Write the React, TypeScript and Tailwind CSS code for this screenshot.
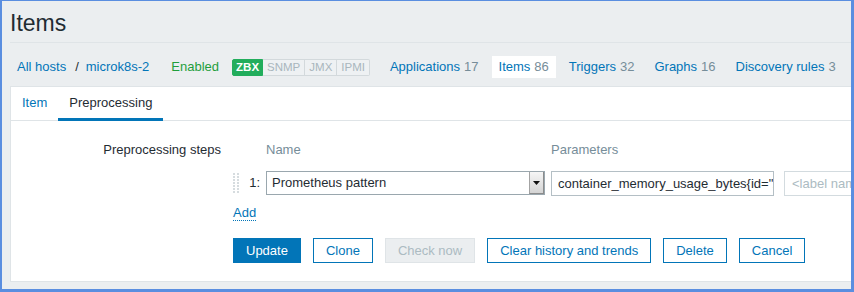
import React from "react";

function DragHandle() {
  const dots = [];
  for (let r = 0; r < 7; r++) {
    for (let c = 0; c < 2; c++) {
      dots.push(<rect key={`${r}-${c}`} x={c * 4} y={r * 3} width="2" height="2" fill="#d6dcdf" />);
    }
  }
  return (
    <svg width="6" height="20" viewBox="0 0 6 20" className="shrink-0">
      {dots}
    </svg>
  );
}

function NavItem({ label, count, active }: { label: string; count: string; active?: boolean }) {
  return (
    <div className={`flex h-[22px] items-center px-[7px] whitespace-nowrap ${active ? "bg-white" : ""}`}>
      <span className="text-[#0275b8]">{label}</span>
      <span className="ml-[4px] text-[#768d99]">{count}</span>
    </div>
  );
}

export default function App() {
  return (
    <div className="w-[854px] h-[292px] overflow-hidden border-l-2 border-t border-r-[3px] border-b-[3px] border-[#5a8ee0] bg-[#ebeef0] font-['Liberation_Sans',Arial,sans-serif] text-[13px] text-[#1f2c33]">
      <div className="pl-[8px]">
        <div className="pt-[9px] pb-[6px] border-b border-[#dfe4e7]">
          <h1 className="text-[23px] leading-[26px] font-normal">Items</h1>
        </div>

        <div className="flex items-center pt-[13px] pb-[8px] h-[43px] whitespace-nowrap">
          <span className="ml-[7px] text-[#0275b8]">All hosts</span>
          <span className="ml-[9px] text-[#1f2c33]">/</span>
          <span className="ml-[7px] text-[#0275b8]">microk8s-2</span>
          <span className="ml-[22px] text-[#1f9e3c]">Enabled</span>
          <div className="ml-[13px] flex h-[17px] text-[11.5px] leading-[15px]">
            <span className="px-[3px] border border-[#22ad5c] bg-[#22ad5c] text-white font-bold rounded-l-[2px]">ZBX</span>
            <span className="px-[4px] border-y border-r border-[#d3d9dc] bg-[#eef1f3] text-[#a9b6bd]">SNMP</span>
            <span className="px-[4px] border-y border-r border-[#d3d9dc] bg-[#eef1f3] text-[#a9b6bd]">JMX</span>
            <span className="px-[4px] border-y border-r border-[#d3d9dc] bg-[#eef1f3] text-[#a9b6bd] rounded-r-[2px]">IPMI</span>
          </div>
          <div className="ml-[13px] flex gap-[6px]">
            <NavItem label="Applications" count="17" />
            <NavItem label="Items" count="86" active />
            <NavItem label="Triggers" count="32" />
            <NavItem label="Graphs" count="16" />
            <NavItem label="Discovery rules" count="3" />
          </div>
        </div>

        <div className="bg-white border-t border-l border-b border-[#dfe4e7]">
          <div className="flex h-[34px] border-b border-[#dfe4e7]">
            <div className="flex h-[34px] items-center px-[11px] pt-px border-b-[3px] border-transparent text-[#0275b8]">Item</div>
            <div className="flex h-[34px] items-center px-[11px] pt-px border-b-[3px] border-[#0275b8] text-[#1f2c33]">Preprocessing</div>
          </div>

          <div className="flex pt-[19px] pb-[18px]">
            <div className="w-[210px] shrink-0 text-right leading-[20px]">Preprocessing steps</div>
            <div className="ml-[12px] flex flex-col">
              <div className="flex h-[20px] items-center text-[#768d99]">
                <div className="w-[33px] shrink-0" />
                <div className="w-[285px] shrink-0">Name</div>
                <div>Parameters</div>
              </div>

              <div className="mt-[11px] flex h-[24px] items-center">
                <DragHandle />
                <div className="w-[21px] shrink-0 text-right">1:</div>
                <div className="ml-[6px] flex h-[24px] w-[279px] shrink-0 items-center border border-[#9aa7ae] bg-white">
                  <span className="flex-1 pl-[5px] whitespace-nowrap">Prometheus pattern</span>
                  <div className="flex h-[22px] w-[15px] items-center justify-center border-l border-[#a3a3a3] border-r border-b border-r-[#8c8c8c] border-b-[#8c8c8c] bg-gradient-to-b from-[#f6f6f6] to-[#d4d4d4]">
                    <svg width="7" height="4" viewBox="0 0 7 4">
                      <path d="M0 0h7L3.5 4z" fill="#111" />
                    </svg>
                  </div>
                </div>
                <div className="ml-[6px] h-[25px] w-[223px] shrink-0 overflow-hidden whitespace-nowrap border border-[#b4bfc5] bg-white pl-[6px] leading-[23px]">
                  container_memory_usage_bytes{'{'}id="/"{'}'}
                </div>
                <div className="ml-[10px] h-[25px] w-[120px] shrink-0 overflow-hidden whitespace-nowrap border border-[#d3dbdf] bg-white pl-[7px] leading-[23px] text-[#acbbc2]">
                  &lt;label name&gt;
                </div>
              </div>

              <div className="mt-[10px] flex">
                <span className="block h-[16px] leading-[15px] border-b border-dotted border-[#0275b8] text-[#0275b8]">Add</span>
              </div>

              <div className="mt-[17px] flex gap-[12px] whitespace-nowrap">
                <button className="h-[25px] px-[12px] leading-[23px] border border-[#0275b8] bg-[#0275b8] text-white">Update</button>
                <button className="h-[25px] px-[12px] leading-[23px] border border-[#0275b8] bg-white text-[#0275b8]">Clone</button>
                <button className="h-[25px] px-[12px] leading-[23px] border border-[#dfe4e7] bg-[#ebeef0] text-[#acbbc2]">Check now</button>
                <button className="h-[25px] px-[12px] leading-[23px] border border-[#0275b8] bg-white text-[#0275b8]">Clear history and trends</button>
                <button className="h-[25px] px-[12px] leading-[23px] border border-[#0275b8] bg-white text-[#0275b8]">Delete</button>
                <button className="h-[25px] px-[12px] leading-[23px] border border-[#0275b8] bg-white text-[#0275b8]">Cancel</button>
              </div>
            </div>
          </div>
        </div>
      </div>
    </div>
  );
}
